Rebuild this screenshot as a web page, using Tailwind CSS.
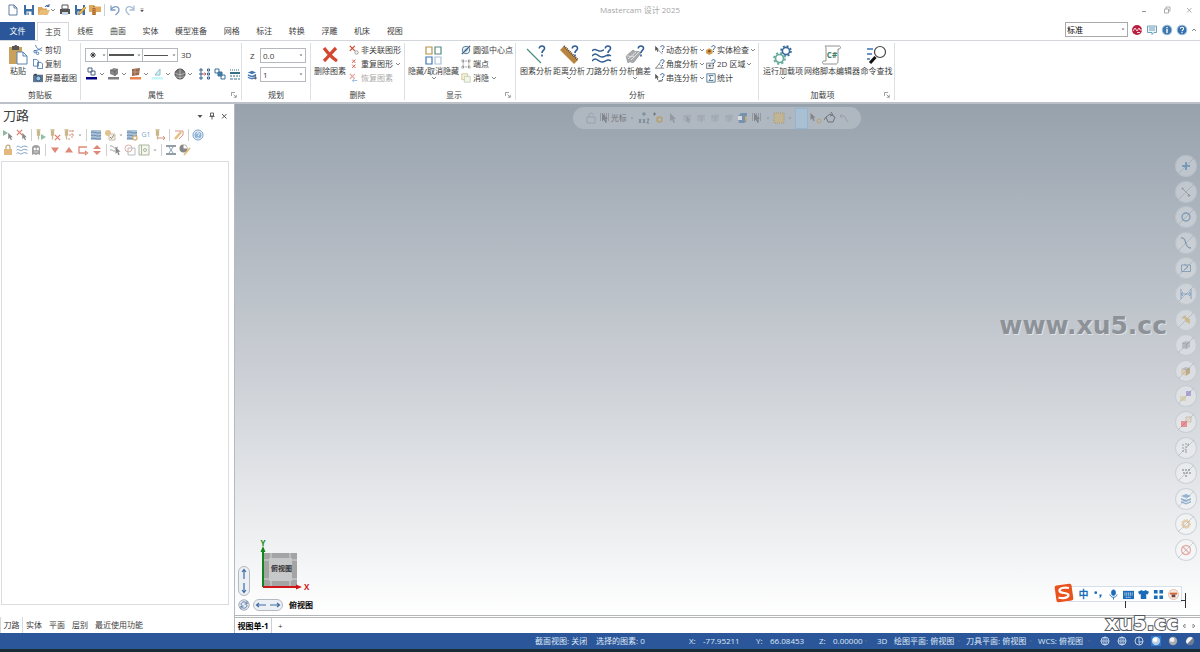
<!DOCTYPE html>
<html lang="zh-CN">
<head>
    <meta charset="UTF-8">
    <meta name="viewport" content="width=device-width, initial-scale=1.0">
    <title>Mastercam 设计 2025</title>
    <script src="https://cdn.jsdelivr.net/npm/@tailwindcss/browser@4"></script>
    <style>
        .outline-text {
            -webkit-text-stroke: 2px #55585c;
            paint-order: stroke fill;
        }
        .guide-button {
            background: linear-gradient(135deg, transparent 48%, rgba(120, 140, 160, .35) 50%, transparent 52%), rgba(255, 255, 255, .3);
        }
    </style>
</head>
<body class="flex h-screen flex-col overflow-hidden bg-white font-['Open_Sans','Noto_Sans_CJK_SC',sans-serif] text-[8px] leading-none text-[#3c3c3c]">

    <!-- Shared icons -->
    <svg class="hidden" fill="none">
        <symbol id="chev" viewBox="0 0 6 6"><path d="M1 2l2 2 2-2" fill="none" stroke="#666" stroke-width=".8"/></symbol>
        <symbol id="caret" viewBox="0 0 6 6"><path d="M1.500 2.500h3l-1.500 1.700z" fill="#777"/></symbol>
        <symbol id="launch" viewBox="0 0 6 6"><path d="M.5 4V.5H4M2.500 2.500l2.500 2.500M5.300 2.800v2.500H2.800" fill="none" stroke="#777" stroke-width=".7"/></symbol>
        <symbol id="cursor" viewBox="0 0 12 12"><path d="M3 1v8.500l2-2 1.500 3.500 1.500-.7L6.500 7H9z" fill="#555"/></symbol>
        <symbol id="question" viewBox="0 0 8 12"><path d="M1.300 3.500C1.300 0 6.700.3 6.500 3.500 6.400 5.500 4 5.500 4 8M4 9.500v2" fill="none" stroke="#2f5b96" stroke-width="1.600"/></symbol>
        <symbol id="redx" viewBox="0 0 12 12"><path d="M1.500 1.500l9 9M10.500 1.500l-9 9" fill="none" stroke="#d04a35" stroke-width="2.200"/></symbol>
        <symbol id="save" viewBox="0 0 12 12"><path d="M1 1h10v10H2L1 10z" fill="#3b6ea5"/><path d="M3 1h6v4H3zM3.500 7.500h5V11h-5z" fill="#fff"/><path d="M4.500 8.500h1.200V11H4.500z" fill="#3b6ea5"/></symbol>
        <symbol id="globe" viewBox="0 0 12 12"><circle cx="6" cy="6" r="4.800" fill="none" stroke="#dbe6f5" stroke-width="1"/><path d="M1 6h10M6 1v10M6 1.200c-3.200 2.800-3.200 6.800 0 9.600M6 1.200c3.200 2.800 3.200 6.800 0 9.600" fill="none" stroke="#dbe6f5" stroke-width=".8"/></symbol>
        <symbol id="waves" viewBox="0 0 12 12"><path d="M.5 3c2-2.500 3.500 1.500 5.500 0s3.500-1 5.500 0M.5 6.300c2-2.500 3.500 1.500 5.500 0s3.500-1 5.500 0M.5 9.600c2-2.500 3.500 1.500 5.500 0s3.500-1 5.500 0" fill="none" stroke="#4a78ad" stroke-width="1"/></symbol>
        <symbol id="block" viewBox="0 0 12 12"><path d="M1 1h10v10H1z" fill="#8aa9c9"/><path d="M1 3.500c3-2 6 2 10 0M1 6.500c3-2 6 2 10 0M1 9.500c3-2 6 2 10 0" fill="none" stroke="#2d5c8c" stroke-width="1.200"/></symbol>
        <symbol id="tool" viewBox="0 0 12 12"><path d="M1.500 1h4M3.500 1v9.500M2.500 2v4h2V2" fill="none" stroke="#b39a5c" stroke-width="1.300"/></symbol>
        <symbol id="cube" viewBox="0 0 12 12"><path d="M2 4l3.500-2L10 3v5L6.500 10 2 9z" fill="#9aa0a7"/><path d="M2 4l4.500 1L10 3M6.500 5v5" fill="none" stroke="#6c737b" stroke-width=".7"/></symbol>
        <symbol id="layers" viewBox="0 0 12 12"><path d="M1 3l5-2 5 2-5 2zM1 5l5 2 5-2v2L6 9 1 7zM1 8l5 2 5-2v1.500l-5 2-5-2z" fill="#4079b5"/></symbol>
    </svg>

    <!-- Title bar -->
    <header class="relative flex h-5 shrink-0 items-center pl-[7px] pr-1">
        <button aria-label="新建" class="mr-1 size-3"><svg viewBox="0 0 12 12" fill="#fff" stroke="#4f7199" stroke-width=".9"><path d="M2 1h5l3 3v7H2zM7 1v3h3"/></svg></button>
        <button aria-label="保存" class="mr-[3px] size-3"><svg viewBox="0 0 12 12"><use href="#save"/></svg></button>
        <button aria-label="打开" class="size-3"><svg viewBox="0 0 12 12"><path d="M0 11V3h4l1 1.500h4V6" fill="#dba55a"/><path d="M0 11l2.500-5H12l-2.500 5z" fill="#e8bd78"/><path d="M7 3c1-2 2.500-2 4-1M11 0v2.500H8.500" fill="none" stroke="#3f6d9f"/></svg></button>
        <svg class="mr-[3px] size-1.5"><use href="#chev"/></svg>
        <button aria-label="打印" class="mr-[3px] size-3"><svg viewBox="0 0 12 12"><path d="M3 1h6v4H3z" fill="#fff" stroke="#555"/><path d="M1 5h10v5H1z" fill="#555"/><path d="M3 8h6v3H3z" fill="#c9d9ea"/></svg></button>
        <button aria-label="另存为" class="mr-[3px] size-3"><svg viewBox="0 0 12 12"><use href="#save"/><path d="M4.500 10.500l.7-2.500L10.500 2.500 12 4 7 9.800z" fill="#efb64b" stroke="#6a5630" stroke-width=".4"/></svg></button>
        <button aria-label="打包" class="size-3"><svg viewBox="0 0 12 12"><path d="M0 1h5l1 1.500h6V8H0z" fill="#e0a95b"/><path d="M3 4h4v7H3z" fill="#d0873d"/><path d="M5 2v9" stroke="#555" stroke-dasharray="1 1"/></svg></button>
        <span class="ml-[3px] mr-1 h-3 w-px bg-[#c9cfd6]"></span>
        <button aria-label="撤销" class="mr-[3px] size-3"><svg viewBox="0 0 12 12" fill="none" stroke="#7c9cc3" stroke-width="1.300"><path d="M2 1.500V6h4.500M2 5.500C5 1 10 2 10 6c0 2-1.500 3.500-3.500 5"/></svg></button>
        <button aria-label="重做" class="mr-[3px] size-3"><svg viewBox="0 0 12 12" fill="none" stroke="#a9bdd5" stroke-width="1.300"><path d="M10 1.500V6H5.500M10 5.500C7 1 2 2 2 6c0 2 1.500 3.500 3.500 5"/></svg></button>
        <svg class="size-1.5"><path d="M1.500 1.500h3M1.500 3h3L3 5z" fill="#555" stroke="#555" stroke-width=".4"/></svg>
        <h1 class="absolute inset-x-0 text-center text-[#a6a6a6] pl-20">Mastercam 设计 2025</h1>
        <div class="relative ml-auto flex gap-2.5 text-[#999]">
            <button aria-label="最小化" class="size-3"><svg viewBox="0 0 12 12" fill="none" stroke="currentColor"><path d="M2 7.500h4"/></svg></button>
            <button aria-label="还原" class="size-3"><svg viewBox="0 0 12 12" fill="none" stroke="currentColor" stroke-width=".8"><path d="M2.500 5h4v4h-4zM4 5V3h4v4H6.500"/></svg></button>
            <button aria-label="关闭" class="size-3"><svg viewBox="0 0 12 12" fill="none" stroke="currentColor" stroke-width=".8"><path d="M3 4l4.500 4.500M7.500 4L3 8.500"/></svg></button>
        </div>
    </header>

    <!-- Ribbon tabs -->
    <nav class="flex h-[21px] shrink-0 items-end border-b border-[#d3d7dc]">
        <button class="mr-0.5 h-[18px] w-[35px] bg-[#2b579a] text-white">文件</button>
        <button class="-mb-px h-[19px] w-8 border border-b-0 border-[#d3d7dc] bg-white pb-px">主页</button>
        <div class="flex h-[18px] w-[342px] *:grow">
            <button>线框</button>
            <button>曲面</button>
            <button>实体</button>
            <button>模型准备</button>
            <button>网格</button>
            <button>标注</button>
            <button>转换</button>
            <button>浮雕</button>
            <button>机床</button>
            <button>视图</button>
        </div>
        <div class="mb-[3px] ml-auto flex items-center gap-[3px] pr-[3px]">
            <div class="relative">
                <select aria-label="配置" class="block h-[15px] w-[63px] appearance-none border border-[#aaa] bg-white pl-px text-black"><option>标准</option></select>
                <svg class="pointer-events-none absolute right-0.5 top-1 size-1.5"><use href="#caret"/></svg>
            </div>
            <button aria-label="Mastercam" class="size-3"><svg viewBox="0 0 12 12"><circle cx="6" cy="6" r="5" fill="#b9203f"/><path d="M2 7l2-3 2 3 2-3 1 2h2M6 8.500h3" fill="none" stroke="#f6d5dc"/></svg></button>
            <button aria-label="反馈" class="size-3"><svg viewBox="0 0 12 12" fill="#edf4f8" stroke="#6297b5" stroke-width=".9"><path d="M1.500 2h9v6.500H8L6 10.500V8.500H1.500zM3 4h6M3 6h6"/></svg></button>
            <button aria-label="信息" class="size-3"><svg viewBox="0 0 12 12"><circle cx="6" cy="6" r="4.800" fill="#3c78ad" stroke="#9bbdd8"/><path d="M6 3v1.200M6 5v4" stroke="#fff" stroke-width="1.400"/></svg></button>
            <button aria-label="帮助" class="size-3"><svg viewBox="0 0 12 12"><circle cx="6" cy="6" r="4.800" fill="#3670ab" stroke="#9bbdd8"/><path d="M4.300 4.800c.2-2.300 3.500-2 3.300 0C7.500 6 6 6 6 7.200M6 8v1.300" fill="none" stroke="#fff" stroke-width="1.100"/></svg></button>
            <button aria-label="折叠功能区" class="size-1.5"><svg viewBox="0 0 6 6"><path d="M1 4l2-2 2 2" fill="none" stroke="#666" stroke-width=".8"/></svg></button>
        </div>
    </nav>

    <!-- Ribbon -->
    <section class="flex h-[63px] shrink-0 border-b-2 border-[#bcc2c8] py-0.5 whitespace-nowrap">
        <div class="flex w-[81px] flex-col border-r border-[#dcdfe3]">
            <div class="flex pl-2">
                <button class="flex w-5 flex-col items-center pt-0.5">
                    <svg class="size-5" viewBox="0 0 20 20"><path d="M1 2h13v17H1z" fill="#c9a05c"/><path d="M4 3V1h2.500c0-1.500 2.500-1.500 2.500 0H11v4H4z" fill="#555"/><path d="M9 7h6l4 4v8H9z" fill="#fff" stroke="#5a83b0"/><path d="M15 7v4h4" fill="none" stroke="#5a83b0"/></svg>
                    <span class="mt-0.5">粘贴</span>
                </button>
                <div class="ml-[5px] *:flex *:h-3.5 *:items-center *:gap-0.5">
                    <button><svg class="size-2.5" viewBox="0 0 12 12" fill="none" stroke="#3e70a8"><path d="M3 0c1 4 3 5 8 7M1 7C5 7 8 5 11 3"/><circle cx="2.500" cy="8" r="1.500"/><circle cx="5.500" cy="10" r="1.500"/></svg>剪切</button>
                    <button><svg class="size-2.5" viewBox="0 0 12 12" fill="#fff" stroke="#3e70a8"><path d="M.5.5h4l2 2v6h-6zM5.500 4h4l2 2v5.500h-6z"/></svg>复制</button>
                    <button><svg class="size-2.5" viewBox="0 0 12 12"><path d="M0 2h12v9H0z" fill="#627890"/><path d="M1.500 1h3v2h-3z" fill="#333"/><circle cx="6.500" cy="6.500" r="3" fill="#9fc4e5" stroke="#244c79"/></svg>屏幕截图</button>
                </div>
            </div>
            <p class="mt-auto pb-px text-center">剪贴板</p>
        </div>

        <div class="relative flex w-[161px] flex-col border-r border-[#dcdfe3] pl-1">
            <div class="mt-[5px] flex items-center">
                <div class="flex h-3.5 border border-[#b5b8bc] *:flex *:items-center *:justify-between *:px-1">
                    <button aria-label="点样式" class="w-[22px] border-r border-[#b5b8bc]"><svg class="size-1.5" viewBox="0 0 6 6" stroke="#222" stroke-width=".8"><path d="M0 3h6M3 0v6M1 1l4 4M5 1L1 5"/></svg><svg class="-mr-1 size-1.5"><use href="#caret"/></svg></button>
                    <button aria-label="线型" class="w-[35px] border-r border-[#b5b8bc] !pl-px"><span class="h-0.5 w-[25px] bg-[#555]"></span><svg class="-mr-1 size-1.5"><use href="#caret"/></svg></button>
                    <button aria-label="线宽" class="w-[34px] !pl-px"><span class="h-px w-6 bg-[#555]"></span><svg class="-mr-1 size-1.5"><use href="#caret"/></svg></button>
                </div>
                <button class="ml-[3px]">3D</button>
            </div>
            <div class="mt-[5px] flex items-center pl-px *:flex *:items-center">
                <button aria-label="线框颜色" class="w-[22px]"><svg class="h-[13px] w-3" viewBox="0 0 12 13"><path d="M2 1h4v4H2zM5 4h4v4H5z" fill="none" stroke="#4f6480"/><path d="M0 10h11v2.500H0z" fill="#000080"/></svg><svg class="ml-px size-1.5"><use href="#chev"/></svg></button>
                <button aria-label="实体颜色" class="w-[22px]"><svg class="h-[13px] w-3" viewBox="0 0 12 13"><path d="M2 3l4-2 4 1v5L7 9 2 7z" fill="#888"/><path d="M2 3l5 1.500V9M7 4.500L10 2" fill="none" stroke="#555" stroke-width=".6"/><path d="M0 10h11v2.500H0z" fill="#808080"/></svg><svg class="ml-px size-1.5"><use href="#chev"/></svg></button>
                <button aria-label="曲面颜色" class="w-[22px]"><svg class="h-[13px] w-3" viewBox="0 0 12 13"><path d="M2 2l8-1-1 7-7 1z" fill="#98694e"/><path d="M5 2v6M2 5h8" stroke="#d5b39c" stroke-width=".6"/><path d="M0 10h11v2.500H0z" fill="#ec8250"/></svg><svg class="ml-px size-1.5"><use href="#chev"/></svg></button>
                <button aria-label="网格颜色" class="w-[22px]"><svg class="h-[13px] w-3" viewBox="0 0 12 13"><path d="M3 8l5-6v6z" fill="#d8f4f8" stroke="#90bcc7"/><path d="M0 10h11v2.500H0z" fill="#c6f6fa"/></svg><svg class="ml-px size-1.5"><use href="#chev"/></svg></button>
                <button aria-label="材质" class="mr-1 w-[21px]"><svg class="size-3" viewBox="0 0 12 12"><circle cx="6" cy="6" r="5" fill="#777" stroke="#444"/><path d="M1 5c3 2 7 2 10 0M1 8c3 2 7 2 10 0M6 1v10" fill="none" stroke="#ccc" stroke-width=".7"/></svg><svg class="ml-px size-1.5"><use href="#chev"/></svg></button>
                <button aria-label="设置全部" class="mr-[3px] w-3"><svg class="size-3" viewBox="0 0 12 12" fill="none" stroke="#356092"><path d="M1 1h2v2H1zM1 5h2v2H1zM1 9h2v2H1zM8.500 1h2v2h-2zM8.500 5h2v2h-2zM8.500 9h2v2h-2z"/><path d="M3.500 6H7M5.500 4.500L7 6 5.500 7.500" stroke="#c45c47"/></svg></button>
                <button aria-label="清除颜色" class="mr-[3px] w-3"><svg class="size-3" viewBox="0 0 12 12" fill="#fff" stroke="#3d709f"><path d="M1 1h4v4H1zM7 7h4v4H7z"/><path d="M4 4h4v4H4z" fill="#3c83a6"/></svg></button>
                <button aria-label="线条属性" class="w-3"><svg class="size-3" viewBox="0 0 12 12" fill="none" stroke="#397184"><path d="M1 2h10" stroke-dasharray="1 1"/><path d="M1 5h10" stroke-width="2"/><path d="M1 8h10" stroke-dasharray="2 1"/><path d="M1 11h10" stroke-dasharray="3 1"/></svg></button>
            </div>
            <p class="mt-auto pb-px pr-3.5 text-center">属性</p>
            <button aria-label="属性选项" class="absolute bottom-0.5 right-1"><svg class="size-1.5"><use href="#launch"/></svg></button>
        </div>

        <div class="flex w-[69px] flex-col border-r border-[#dcdfe3]">
            <div class="grid grid-cols-[10px_46px] items-center gap-x-[3px] gap-y-1 pl-[5px] pt-[5px]">
                <label for="depth" class="pl-[3px]">Z</label>
                <div class="relative"><input id="depth" type="text" value="0.0" class="block h-[15px] w-full border border-[#b5b8bc] px-0.5"><svg class="absolute right-0.5 top-1 size-1.5"><use href="#caret"/></svg></div>
                <label for="level" aria-label="层别"><svg class="size-2.5" viewBox="0 0 12 12"><use href="#layers"/><path d="M10 5v6M8 9l2 2 2-2" fill="none" stroke="#555"/></svg></label>
                <div class="relative"><input id="level" type="text" value="1" class="block h-[15px] w-full border border-[#b5b8bc] px-0.5"><svg class="absolute right-0.5 top-1 size-1.5"><use href="#caret"/></svg></div>
            </div>
            <p class="mt-auto pb-px text-center">规划</p>
        </div>

        <div class="flex w-[94px] flex-col border-r border-[#dcdfe3]">
            <div class="flex pl-[3px]">
                <button class="flex w-8 flex-col items-center pt-0.5">
                    <svg class="size-5" viewBox="0 0 20 20"><path d="M4 3c3 4 7 9 13 13M16 3C12 7 8 12 4 16" fill="none" stroke="#d4472e" stroke-width="3.200"/></svg>
                    <span class="mt-0.5">删除图素</span>
                </button>
                <div class="ml-[3px] *:flex *:h-3.5 *:items-center *:gap-0.5">
                    <button><svg class="size-2.5" viewBox="0 0 12 12"><use href="#redx" width="8" height="8"/><circle cx="9" cy="9" r="2" fill="none" stroke="#888"/></svg>非关联图形</button>
                    <button><svg class="size-2.5" viewBox="0 0 12 12"><use href="#redx" x="3" width="5.500" height="5.500"/><use href="#redx" x="3" y="6" width="5.500" height="5.500"/></svg>重复图形<svg class="size-1.5"><use href="#chev"/></svg></button>
                    <button disabled class="text-[#aaa]"><svg class="size-2.5" viewBox="0 0 12 12"><use href="#redx" width="8" height="8" opacity=".5"/><path d="M4 9h6M6 7l-2 2 2 2" fill="none" stroke="#8fb3da"/></svg>恢复图素</button>
                </div>
            </div>
            <p class="mt-auto pb-px text-center">删除</p>
        </div>

        <div class="relative flex w-[111px] flex-col border-r border-[#dcdfe3]">
            <div class="flex pl-[3px]">
                <button class="flex w-[51px] flex-col items-center pt-0.5">
                    <svg class="size-5" viewBox="0 0 20 20" fill="#fff" stroke-width="1.200"><path d="M2 2h6v7H2z" stroke="#b99345"/><path d="M11 2h6v7h-6z" stroke="#568b84"/><path d="M2 12h6v7H2z" stroke="#3e75b5"/><path d="M11 12h6v7h-6z" stroke="#a8bfdc"/></svg>
                    <span class="mt-0.5">隐藏/取消隐藏</span>
                    <svg class="size-1.5"><use href="#chev"/></svg>
                </button>
                <div class="ml-0.5 *:flex *:h-3.5 *:items-center *:gap-0.5">
                    <button><svg class="size-2.5" viewBox="0 0 12 12" fill="none" stroke="#315f86"><circle cx="6" cy="6" r="4.500"/><path d="M1 11L11 1" stroke-width="1.500"/><path d="M6 3v6M3 6h6" stroke-width=".6"/></svg>圆弧中心点</button>
                    <button><svg class="size-2.5" viewBox="0 0 12 12" fill="none" stroke="#555"><path d="M2.500 2.500h7v7h-7z" stroke-dasharray="1 1"/><path d="M1 1h2v2H1zM9 1h2v2H9zM1 9h2v2H1zM9 9h2v2H9z" stroke-width=".5"/></svg>端点</button>
                    <button><svg class="size-2.5" viewBox="0 0 12 12" fill="#f8f5e4" stroke="#c9bd86"><path d="M1 1h7v7H1z"/><path d="M4 4h7v7H4z" stroke="#b9cbbb"/></svg>消隐<svg class="size-1.5"><use href="#chev"/></svg></button>
                </div>
            </div>
            <p class="mt-auto pb-px pr-3 text-center">显示</p>
            <button aria-label="显示选项" class="absolute bottom-0.5 right-1"><svg class="size-1.5"><use href="#launch"/></svg></button>
        </div>

        <div class="flex w-[243px] flex-col border-r border-[#dcdfe3]">
            <div class="flex gap-px pl-1 *:w-8 *:shrink-0">
                <button class="flex flex-col items-center pt-0.5">
                    <svg class="size-5" viewBox="0 0 20 20"><path d="M1 4l14 14" stroke="#4f8f7e" stroke-width="1.200"/><use href="#question" x="12" width="8" height="12"/></svg>
                    <span class="mt-0.5">图素分析</span>
                </button>
                <button class="flex flex-col items-center pt-0.5">
                    <svg class="size-5" viewBox="0 0 20 20"><path d="M1 5l4-4 14 14-4 4z" fill="#b98440"/><path d="M5 1l14 14" stroke="#5b4430" stroke-width="2" stroke-dasharray="1 1"/><use href="#question" x="12" width="8" height="12"/></svg>
                    <span class="mt-0.5">距离分析</span>
                    <svg class="size-1.5"><use href="#chev"/></svg>
                </button>
                <button class="flex flex-col items-center pt-0.5">
                    <svg class="size-5" viewBox="0 0 20 20" fill="none" stroke="#315f91" stroke-width="1.400"><path d="M0 6c3-4 6 1 9 0s2-1 3-1M0 11c4-5 6 1 10 1s5-4 9-1M0 16c4-5 6 1 10 1s5-4 9-1"/><use href="#question" x="12" width="8" height="12"/></svg>
                    <span class="mt-0.5">刀路分析</span>
                </button>
                <button class="flex flex-col items-center pt-0.5">
                    <svg class="size-5" viewBox="0 0 20 20"><path d="M1 11L8 5c3 3 5 0 8 3l-7 9c-3 2-3-2-6 1z" fill="#a9acae" stroke="#777" stroke-width=".5"/><path d="M3 14l8-7M6 15l8-8M1 11c3-1 3 2 8 0" fill="none" stroke="#eee" stroke-width=".8"/><use href="#question" x="12" width="8" height="12"/></svg>
                    <span class="mt-0.5">分析偏差</span>
                    <svg class="size-1.5"><use href="#chev"/></svg>
                </button>
                <div class="ml-[3px] !w-auto *:flex *:h-3.5 *:items-center *:gap-px">
                    <button><svg class="size-2.5" viewBox="0 0 12 12"><use href="#cursor" x="-2" width="9" height="9"/><path d="M3 5l6 6" stroke="#888"/><use href="#question" x="6" width="6" height="9"/></svg>动态分析<svg class="size-1.5"><use href="#chev"/></svg></button>
                    <button><svg class="size-2.5" viewBox="0 0 12 12"><path d="M1 11L7 3M0 11h11M5 6c2 1 3 3 3 5" fill="none" stroke="#777"/><use href="#question" x="6" width="6" height="9"/></svg>角度分析<svg class="size-1.5"><use href="#chev"/></svg></button>
                    <button><svg class="size-2.5" viewBox="0 0 12 12"><use href="#cursor" x="-2" width="9" height="9"/><path d="M4 10l5-1" stroke="#888" stroke-width="2"/><use href="#question" x="6" width="6" height="9"/></svg>串连分析<svg class="size-1.5"><use href="#chev"/></svg></button>
                </div>
                <div class="!w-auto *:flex *:h-3.5 *:items-center *:gap-px">
                    <button><svg class="size-2.5" viewBox="0 0 12 12"><path d="M0 6l4-2 4 2v4l-4 2-4-2z" fill="#d39e50"/><circle cx="4" cy="7.500" r="1.500" fill="#70532d"/><use href="#question" x="6" width="6" height="9"/></svg>实体检查<svg class="size-1.5"><use href="#chev"/></svg></button>
                    <button><svg class="size-2.5" viewBox="0 0 12 12"><path d="M.5 5h8v6.500h-8z" fill="#e5e8eb" stroke="#777"/><path d="M3 8h3M4.500 6.500v3" stroke="#555"/><use href="#question" x="6" width="6" height="9"/></svg>2D 区域<svg class="size-1.5"><use href="#chev"/></svg></button>
                    <button><svg class="size-2.5" viewBox="0 0 12 12" fill="none" stroke="#416a87"><path d="M1 1h10v10H1z"/><path d="M8.500 4V3h-5L6 6 3.500 9h5V8"/></svg>统计</button>
                </div>
            </div>
            <p class="mt-auto pb-px text-center">分析</p>
        </div>

        <div class="relative flex w-[136px] flex-col border-r border-[#dcdfe3]">
            <div class="flex gap-0.5 pl-1">
                <button class="flex w-10 flex-col items-center pt-0.5">
                    <svg class="size-5" viewBox="0 0 20 20" fill="none"><circle cx="13" cy="6" r="3.600" stroke="#37699c" stroke-width="1.600"/><circle cx="13" cy="6" r="5" stroke="#37699c" stroke-width="1.600" stroke-dasharray="2 1.930"/><circle cx="6.500" cy="13.500" r="4" stroke="#67ab9d" stroke-width="1.700"/><circle cx="6.500" cy="13.500" r="5.500" stroke="#67ab9d" stroke-width="1.700" stroke-dasharray="2.200 2.120"/></svg>
                    <span class="mt-0.5">运行加载项</span>
                    <svg class="size-1.5"><use href="#chev"/></svg>
                </button>
                <button class="flex w-[54px] flex-col items-center pt-0.5">
                    <svg class="size-5" viewBox="0 0 20 20"><path d="M3 1h14c2 0 2 3 0 3h-1v12c0 2-1 3-2 3H2c-2 0-2-3 0-3h2V3c0-1-1-2-1-2z" fill="#fff" stroke="#777" stroke-width=".8"/><text x="10" y="13" text-anchor="middle" font-size="8" font-weight="700" fill="#3f7e67">C#</text></svg>
                    <span class="mt-0.5">网络脚本编辑器</span>
                </button>
                <button class="flex w-[31px] flex-col items-center pt-0.5">
                    <svg class="size-5" viewBox="0 0 20 20" fill="none"><path d="M0 4h6M0 9h5M0 14h3" stroke="#3a74b2" stroke-width="1.500"/><circle cx="13" cy="7" r="5.500" stroke="#444" stroke-width="1.200"/><path d="M8.500 12L3 18" stroke="#111" stroke-width="3"/></svg>
                    <span class="mt-0.5">命令查找</span>
                </button>
            </div>
            <p class="mt-auto pb-px pr-2 text-center">加载项</p>
            <button aria-label="加载项选项" class="absolute bottom-0.5 right-1"><svg class="size-1.5"><use href="#launch"/></svg></button>
        </div>
    </section>

    <main class="flex min-h-0 grow">
        <!-- Toolpath panel -->
        <aside class="flex w-[235px] shrink-0 flex-col border-r border-[#b4bac1]">
            <div class="flex h-[23px] items-center pl-[3px] pr-1.5">
                <h2 class="text-[13px]">刀路</h2>
                <div class="ml-auto flex gap-1 *:size-2">
                    <button aria-label="菜单"><svg viewBox="0 0 8 8"><path d="M1.500 3h5L4 6z" fill="#555"/></svg></button>
                    <button aria-label="固定"><svg viewBox="0 0 8 8" fill="none" stroke="#555" stroke-width=".9"><path d="M2.500 1h3v3h-3zM1.500 4.500h5M4 4.500v3"/></svg></button>
                    <button aria-label="关闭"><svg viewBox="0 0 8 8" fill="none" stroke="#555"><path d="M2 2l4.500 4.500M6.500 2L2 6.500"/></svg></button>
                </div>
            </div>
            <div class="flex h-[15px] items-center gap-0.5 pl-0.5 opacity-70">
                <button aria-label="选择全部" class="size-3"><svg viewBox="0 0 12 12"><path d="M1 1l5 3-5 3z" fill="#5f9c7c"/><use href="#cursor" x="4" y="3" width="9" height="9"/></svg></button>
                <button aria-label="取消选择" class="size-3"><svg viewBox="0 0 12 12"><use href="#redx" width="7" height="7"/><use href="#cursor" x="4" y="3" width="9" height="9"/></svg></button>
                <span class="mx-px h-3 w-px bg-[#bbb]"></span>
                <button aria-label="重新生成" class="size-3"><svg viewBox="0 0 12 12"><use href="#tool"/><path d="M6 5l5 3-5 3z" fill="#5da58a"/></svg></button>
                <button aria-label="重新生成失效" class="size-3"><svg viewBox="0 0 12 12"><use href="#tool"/><use href="#redx" x="5" y="5" width="7" height="7"/></svg></button>
                <button aria-label="切换刀具" class="size-3"><svg viewBox="0 0 12 12"><use href="#tool"/><path d="M6 2h5M9 1v9M6 6h5M5 10h3" fill="none" stroke="#c86448" stroke-dasharray="2 1"/></svg></button>
                <svg class="size-1.5"><use href="#caret"/></svg>
                <span class="mx-px h-3 w-px bg-[#bbb]"></span>
                <button aria-label="刀路模拟" class="size-3"><svg viewBox="0 0 12 12"><use href="#block"/></svg></button>
                <button aria-label="实体验证" class="size-3"><svg viewBox="0 0 12 12"><circle cx="4" cy="4" r="3" fill="#dda75e"/><path d="M5 5h6v6H5z" fill="#f3ead8" stroke="#b1a485"/><path d="M6 8l1.500 1.500L10 6" fill="none" stroke="#555"/></svg></button>
                <svg class="size-1.5"><use href="#caret"/></svg>
                <button aria-label="模拟器选项" class="size-3"><svg viewBox="0 0 12 12"><use href="#block"/><circle cx="9" cy="9" r="2" fill="#fff" stroke="#c99646" stroke-width="1.300"/></svg></button>
                <button aria-label="后处理" class="size-3 text-[7px] text-[#3f79b6]">G1</button>
                <button aria-label="进给" class="size-3"><svg viewBox="0 0 12 12"><use href="#tool"/><path d="M4 9h7M9 7l2 2-2 2" fill="none" stroke="#c86448"/></svg></button>
                <span class="mx-px h-3 w-px bg-[#bbb]"></span>
                <button aria-label="高速进给" class="size-3"><svg viewBox="0 0 12 12"><path d="M2 10l6-7" stroke="#dca64c" stroke-width="2.500"/><path d="M2 2h8v4L6 10" fill="none" stroke="#c96653"/></svg></button>
                <span class="mx-px h-3 w-px bg-[#bbb]"></span>
                <button aria-label="帮助" class="size-3"><svg viewBox="0 0 12 12"><circle cx="6" cy="6" r="5" fill="#fff" stroke="#3b75ad"/><circle cx="6" cy="6" r="3.600" fill="#5e93c5"/><path d="M4.700 5c0-2 2.800-1.800 2.700 0C7.300 6 6 6 6 7.200M6 8v1" fill="none" stroke="#fff" stroke-width=".9"/></svg></button>
            </div>
            <div class="flex h-[15px] items-center gap-0.5 pl-0.5 opacity-70">
                <button aria-label="锁定" class="size-3"><svg viewBox="0 0 12 12"><path d="M2 5h8v6H2z" fill="#d69b45"/><path d="M4 5V3c0-2.500 4-2.500 4 0v2" fill="none" stroke="#a58049" stroke-width="1.200"/></svg></button>
                <button aria-label="显示刀路" class="size-3"><svg viewBox="0 0 12 12"><use href="#waves"/></svg></button>
                <button aria-label="关闭后处理" class="size-3"><svg viewBox="0 0 12 12"><path d="M2 11V4c0-4 8-4 8 0v7L8 10l-2 1-2-1z" fill="#777"/><path d="M4 4h1.500v2H4zM7 4h1.500v2H7zM4 8h4" fill="#fff" stroke="#fff" stroke-width=".6"/></svg></button>
                <span class="mx-px h-3 w-px bg-[#bbb]"></span>
                <button aria-label="下移" class="size-3"><svg viewBox="0 0 12 12"><path d="M2 3.500h8L6 9z" fill="#d1583f"/></svg></button>
                <button aria-label="上移" class="size-3"><svg viewBox="0 0 12 12"><path d="M2 8.500h8L6 3z" fill="#d1583f"/></svg></button>
                <button aria-label="插入箭头" class="size-3"><svg viewBox="0 0 12 12"><path d="M10 3H2v6h7M8 7l2.500 2L8 11" fill="none" stroke="#d1583f" stroke-width="1.300"/></svg></button>
                <button aria-label="滚动" class="size-3"><svg viewBox="0 0 12 12"><path d="M2 5h8L6 1zM2 7h8L6 11z" fill="#d1583f"/></svg></button>
                <span class="mx-px h-3 w-px bg-[#bbb]"></span>
                <button aria-label="仅显示已选" class="size-3"><svg viewBox="0 0 12 12"><path d="M0 2c4-1 3 4 8 1M0 6c3-1 3 2 5 1" fill="none" stroke="#777"/><use href="#cursor" x="3" y="2" width="10" height="10"/></svg></button>
                <button aria-label="仅显示关联" class="size-3"><svg viewBox="0 0 12 12" fill="none"><circle cx="4.500" cy="4.500" r="3.500" stroke="#d28c7c"/><path d="M4 4h7v7H4z" stroke="#9ca2a8"/></svg></button>
                <button aria-label="显示选项" class="size-3"><svg viewBox="0 0 12 12" fill="#f4f4e9" stroke="#879b78"><path d="M1 1h10v10H1zM3.500 1v10"/><circle cx="7" cy="6" r="1.500"/></svg></button>
                <svg class="size-1.5"><use href="#caret"/></svg>
                <span class="mx-px h-3 w-px bg-[#bbb]"></span>
                <button aria-label="机床选项" class="size-3"><svg viewBox="0 0 12 12"><path d="M1 1h10v2H1zM1 9h10v2H1z" fill="#657483"/><path d="M4 3l4 6M8 3L4 9" stroke="#557d9e"/></svg></button>
                <button aria-label="编辑选项" class="size-3"><svg viewBox="0 0 12 12"><circle cx="4.500" cy="4.500" r="4" fill="#555"/><path d="M4.500 4.500V1A3.500 3.500 0 0 1 8 4.500z" fill="#fff"/><path d="M5 11l6-7" stroke="#d8a343" stroke-width="1.800"/></svg></button>
            </div>
            <div class="ml-px mr-[5px] mt-1 grow border border-[#dadcdf]"></div>
            <nav class="mt-3 flex h-4 items-center gap-[7px]">
                <button class="-mr-1 flex h-4 w-[23px] items-center justify-center border border-[#d5d8dc] border-y-0">刀路</button>
                <button>实体</button>
                <button>平面</button>
                <button>层别</button>
                <button>最近使用功能</button>
            </nav>
        </aside>

        <!-- Graphics area -->
        <div class="flex min-w-0 grow flex-col">
            <div class="relative grow bg-linear-to-b from-[#97a2ad] via-[#c9cdd3] to-white">
                <div class="absolute left-[35%] top-[3px] flex h-[22px] w-[288px] items-center gap-0.5 rounded-full bg-[#b4bcc4]/80 pl-3 text-[#70777f]">
                    <div class="flex items-center gap-0.5 opacity-50">
                        <button aria-label="锁定光标" class="size-3"><svg viewBox="0 0 12 12" fill="none" stroke="#858c93"><path d="M2 5h8v6H2zM4 5V3c0-2.500 4-2.500 4 0"/></svg></button>
                        <button class="flex items-center text-[#333]"><svg class="size-3" viewBox="0 0 12 12"><path d="M1 2h10M1 4h10M1 6h10M1 8h10" stroke="#445" stroke-dasharray="1 1"/><use href="#cursor"/></svg>光标</button>
                        <svg class="mr-px size-1.5"><use href="#caret"/></svg>
                        <button aria-label="坐标输入" class="size-3"><svg viewBox="0 0 12 12" fill="none" stroke="#3f5870"><path d="M6 0v4M4 2h4M1 7l2 4M3 7l-2 4M5 7l2 4M7 7l-2 4M9 7h2l-2 4h2"/></svg></button>
                        <button aria-label="捕捉设置" class="mr-px size-3"><svg viewBox="0 0 12 12" fill="none"><circle cx="7.500" cy="7.500" r="2.500" stroke="#c08b22" stroke-width="1.500"/><path d="M1 2h3M2.500 .5v3" stroke="#333"/></svg></button>
                        <button aria-label="选择" class="size-3"><svg viewBox="0 0 12 12" opacity=".6"><use href="#cursor"/></svg></button>
                        <button aria-label="选择边" class="size-3"><svg viewBox="0 0 12 12" opacity=".5"><use href="#cube"/><use href="#cursor" x="3" y="3" width="9" height="9"/></svg></button>
                        <button aria-label="选择面" class="size-3"><svg viewBox="0 0 12 12" opacity=".6"><use href="#cube"/></svg></button>
                        <button aria-label="选择主体" class="size-3"><svg viewBox="0 0 12 12" opacity=".6"><use href="#cube"/></svg></button>
                        <button aria-label="选择特征" class="size-3"><svg viewBox="0 0 12 12" opacity=".6"><use href="#cube"/></svg></button>
                        <button aria-label="选择背面" class="size-3"><svg viewBox="0 0 12 12"><path d="M1 4l3-3h6v8l-3 2H2z" fill="#3e6e9c"/><path d="M1 4h4v4H1z" fill="#fff"/><path d="M8 4h2v5H8z" fill="#d99b37"/></svg></button>
                        <button aria-label="窗选" class="size-3"><svg viewBox="0 0 12 12"><path d="M1 2h10M1 4h10M1 6h10M1 8h10" stroke="#445" stroke-dasharray="1 1"/><use href="#cursor"/></svg></button>
                        <svg class="size-1.5"><use href="#caret"/></svg>
                        <button aria-label="选择方式" class="size-3"><svg viewBox="0 0 12 12"><path d="M1 1h10v10H1z" fill="#d6b46b" stroke="#a17626" stroke-dasharray="1 1"/></svg></button>
                        <svg class="size-1.5"><use href="#caret"/></svg>
                    </div>
                    <button aria-label="自动选择" class="h-[21px] w-[13px] border border-[#93b5d0] bg-[#a9c0d2]"></button>
                    <div class="flex items-center gap-0.5 opacity-50">
                        <button aria-label="验证选择" class="size-3"><svg viewBox="0 0 12 12"><use href="#cursor" x="-2" y="0" width="10" height="10"/><circle cx="9" cy="9" r="2" fill="none" stroke="#c18e30"/></svg></button>
                        <button aria-label="反向选择" class="size-3"><svg viewBox="0 0 12 12" fill="none" stroke="#333"><path d="M2 5l4-3 5 3-2 5H4zM2 5L0 8"/><path d="M7 0l2 3-3 1"/></svg></button>
                        <button aria-label="上次选择" class="size-3"><svg viewBox="0 0 12 12" fill="none" stroke="#888"><path d="M2 4h4l4 6M4 2L2 4l2 2"/></svg></button>
                    </div>
                </div>

                <div class="absolute right-[3px] top-[51px] flex h-[406px] flex-col justify-between *:flex *:size-[22px] *:items-center *:justify-center *:rounded-full *:border *:border-[#aeb9c4]/50 [&_svg]:size-3 [&_svg]:opacity-50">
                    <button class="guide-button" aria-label="点"><svg viewBox="0 0 12 12"><path d="M6 2v8M2 6h8" stroke="#3972a9" stroke-width="2"/></svg></button>
                    <button class="guide-button" aria-label="线"><svg viewBox="0 0 12 12"><path d="M2.500 2.500l7 7M2 2h1v1H2zM9 8v3M7.500 9.500h3" fill="#667" stroke="#667" stroke-width=".9"/></svg></button>
                    <button class="guide-button" aria-label="圆弧"><svg viewBox="0 0 12 12"><circle cx="6" cy="6" r="4" fill="none" stroke="#396a9b" stroke-width="1.300"/></svg></button>
                    <button class="guide-button" aria-label="曲线"><svg viewBox="0 0 12 12"><path d="M1 1c7-1 2 10 10 10" fill="none" stroke="#47688d" stroke-width="1.300"/></svg></button>
                    <button class="guide-button" aria-label="矩形"><svg viewBox="0 0 12 12" fill="none" stroke="#47749d"><path d="M1.500 3h9v6.500h-9zM4 2l4 3M4 8l4-3"/></svg></button>
                    <button class="guide-button" aria-label="标注"><svg viewBox="0 0 12 12" fill="none" stroke="#3972a9"><path d="M1 1v10M11 1v10M1 6h10M3 4L1 6l2 2M9 4l2 2-2 2"/></svg></button>
                    <button class="guide-button" aria-label="修剪"><svg viewBox="0 0 12 12"><path d="M1 4l4-3 2 3 3 1v5L6 8 5 5z" fill="#c9a147"/></svg></button>
                    <button class="guide-button" aria-label="实体"><svg viewBox="0 0 12 12"><use href="#cube"/></svg></button>
                    <button class="guide-button" aria-label="曲面"><svg viewBox="0 0 12 12"><use href="#cube"/><path d="M1 4l5 1v6L1 9z" fill="#d7b98a"/><path d="M6 5l4-2v5l-4 3z" fill="#a37a35"/></svg></button>
                    <button class="guide-button" aria-label="复制属性"><svg viewBox="0 0 12 12"><path d="M0 6h6v5H0z" fill="#cfc28b"/><path d="M6 1h5v5H6z" fill="#7f6cc0"/></svg></button>
                    <button class="guide-button" aria-label="更改颜色"><svg viewBox="0 0 12 12"><path d="M6 1h5v5H6z" fill="#e2d6be" stroke="#b59d77"/><path d="M1 5h6v6H1z" fill="#ea3f46"/></svg></button>
                    <button class="guide-button" aria-label="列表"><svg viewBox="0 0 12 12" fill="none" stroke="#555"><path d="M3 2v8M5 2h4M6 4v6M8 2v3M5 10h2" stroke-dasharray="2 1"/></svg></button>
                    <button class="guide-button" aria-label="网格"><svg viewBox="0 0 12 12" stroke="#555" stroke-width="1.500"><path d="M2 3h8M3 6h8M5 9h3" stroke-dasharray="2 1"/></svg></button>
                    <button class="guide-button" aria-label="层别"><svg viewBox="0 0 12 12"><use href="#layers"/></svg></button>
                    <button class="guide-button" aria-label="设置"><svg viewBox="0 0 12 12" fill="none" stroke="#d4a45f"><circle cx="6" cy="6" r="3" stroke-width="2"/><circle cx="6" cy="6" r="4.500" stroke-dasharray="1.500 1.500"/></svg></button>
                    <button class="guide-button" aria-label="禁用"><svg viewBox="0 0 12 12" fill="none" stroke="#d86a5c" stroke-width="1.300"><circle cx="6" cy="6" r="4.500"/><path d="M2.500 2.500l7 7"/></svg></button>
                </div>

                <p class="absolute right-[33px] top-[209px] font-['DejaVu_Sans'] text-[25px] font-bold text-[#8d9299] [text-shadow:1px_1px_0_#e0e2e5]">www.xu5.cc</p>

                <!-- View gnomon -->
                <div class="absolute bottom-1 left-0.5 h-[74px] w-20">
                    <svg class="absolute inset-0" width="80" height="74" viewBox="0 0 80 74">
                        <path d="M27 16h33v33H27z" fill="#a4a4a4"/>
                        <path d="M32 21h23v23H32z" fill="#c7c8ca"/>
                        <path d="M34 16v5M53 16v5M34 44v5M53 44v5M27 23h5M27 42h5M55 23h5M55 42h5" stroke="#d5d5d5"/>
                        <path d="M26 50V14" stroke="#11861c" stroke-width="2"/><path d="M23.500 15L26 9l2.500 6z" fill="#11861c"/>
                        <path d="M26 50h34" stroke="#cf1515" stroke-width="2"/><path d="M59 47.500l6 2.500-6 2.500z" fill="#cf1515"/>
                        <text x="26" y="9" text-anchor="middle" font-size="8" font-weight="700" fill="#11861c">Y</text>
                        <text x="67" y="53" font-size="8" font-weight="700" fill="#cf1515">X</text>
                        <rect x="1.500" y="29.500" width="11" height="29" rx="5.500" fill="#eceff3" stroke="#b4bac2"/>
                        <path d="M7 33v9M5 35l2-2.500 2 2.500M7 46v9M5 53l2 2.500 2-2.500" fill="none" stroke="#3e6da4" stroke-width="1.200"/>
                        <circle cx="7" cy="68" r="5.200" fill="#e6ebf1" stroke="#a4adba"/>
                        <path d="M4 68c0-4 5-4 6-1M10 68c0 4-5 4-6 1M10 64v3H7.500M4 72v-3h2.500" fill="none" stroke="#4a6f9e" stroke-width=".9"/>
                        <rect x="16.500" y="62.500" width="29" height="11" rx="5.500" fill="#eceff3" stroke="#b4bac2"/>
                        <path d="M20 68h9M22 66l-2.500 2 2.500 2M33 68h9M40 66l2.500 2-2.500 2" fill="none" stroke="#3e6da4" stroke-width="1.200"/>
                    </svg>
                    <span class="absolute left-[34px] top-7 text-[7px] font-bold text-[#333]">俯视图</span>
                    <span class="absolute left-[52px] top-16 whitespace-nowrap font-bold text-black">俯视图</span>
                </div>

                <!-- Input method bar -->
                <div class="absolute bottom-[13px] right-[18px] flex h-4 items-center gap-1 border border-[#d6dfeb] bg-white pl-[9px] pr-0.5 text-[#1a6cb8]">
                    <svg class="absolute -left-[15px] -top-1 size-5" viewBox="0 0 20 20"><rect x="1.500" y="1.500" width="17" height="17" rx="2" transform="rotate(-8 10 10)" fill="#e9511d"/><path d="M15 5C10 4 5 5 5.500 8s9 1 9 4-6 4-10 2.500" fill="none" stroke="#fff" stroke-width="2.200"/></svg>
                    <button class="w-[11px] text-[10px] font-bold">中</button>
                    <button aria-label="标点" class="size-[11px]"><svg viewBox="0 0 12 12" fill="currentColor"><circle cx="3" cy="4" r="1.500"/><path d="M7 6h2.500c0 2-1 3.500-2.500 4L7.500 8H7z"/></svg></button>
                    <button aria-label="语音" class="size-[11px]"><svg viewBox="0 0 12 12" fill="none" stroke="currentColor"><rect x="4" y="1" width="4" height="6" rx="2" fill="currentColor"/><path d="M2 6c1 4 7 4 8 0M6 9v2.500"/></svg></button>
                    <button aria-label="键盘" class="size-[11px]"><svg viewBox="0 0 12 12"><path d="M0 2h12v9H0z" fill="currentColor"/><path d="M1.500 4.500h9M1.500 6.500h9M3 9h6" stroke="#fff" stroke-dasharray="1.200 .8"/></svg></button>
                    <button aria-label="皮肤" class="size-[11px]"><svg viewBox="0 0 12 12" fill="currentColor"><path d="M4 1c1 1.500 3 1.500 4 0l4 2-1.500 3L9 5.500V11H3V5.500L1.500 6 0 3z"/></svg></button>
                    <button aria-label="工具箱" class="size-[11px]"><svg viewBox="0 0 12 12" fill="currentColor"><path d="M1 1h4v4H1zM7 1h4v4H7zM1 7h4v4H1zM7 7h4v4H7z"/></svg></button>
                    <button aria-label="助手" class="size-[11px]"><svg viewBox="0 0 12 12"><circle cx="6" cy="6" r="5.500" fill="#f3e9e2" stroke="#e2a58c" stroke-width=".7"/><path d="M2 4h8v2H2z" fill="#d96633"/><path d="M4 6h4v3H4z" fill="#644"/></svg></button>
                </div>
                <svg class="absolute bottom-1 right-3" width="64" height="20" viewBox="0 0 64 20" fill="none" stroke="#333"><path d="M1.500 10v7M61.500 2v15M57 9.500h4"/></svg>
            </div>
            <div class="relative flex h-[18px] shrink-0 items-center border-t-3 border-double border-[#b4b7ba] bg-white">
                <button class="h-full w-[37px] border-r border-[#ccd0d4] font-bold text-black">视图单-1</button>
                <button aria-label="新建视图单" class="pl-1.5">+</button>
                <span class="h-full grow"></span>
                <button aria-label="向左" class="size-2.5"><svg viewBox="0 0 10 10"><path d="M6 3L4 5l2 2z" fill="none" stroke="#999"/></svg></button>
                <button aria-label="向右" class="mr-px size-2.5"><svg viewBox="0 0 10 10"><path d="M4 3l2 2-2 2z" fill="none" stroke="#999"/></svg></button>
                <p class="outline-text absolute bottom-0 right-[22px] font-['DejaVu_Sans'] text-[20px] font-bold text-white">xu5.cc</p>
            </div>
        </div>
    </main>

    <!-- Status bar -->
    <footer class="flex h-[19px] shrink-0 items-center justify-end whitespace-nowrap border-b-3 border-[#172c35] bg-[#2b579a] pr-[5px] text-[#dfe8f4]">
        <button class="w-[61px] text-left">截面视图: 关闭</button>
        <span class="w-[93px]">选择的图素: 0</span>
        <span class="w-3.5">X:</span><span class="w-[53px]">-77.95211</span>
        <span class="w-3.5">Y:</span><span class="w-[49px]">66.08453</span>
        <span class="w-3.5">Z:</span><span class="w-[30px]">0.00000</span>
        <svg class="mr-2 size-1.5 opacity-50"><use href="#caret"/></svg>
        <button class="w-[17px] text-left">3D</button>
        <button class="flex w-[72px] items-center justify-between pr-1">绘图平面: 俯视图<svg class="size-1.5 opacity-50"><use href="#caret"/></svg></button>
        <button class="flex w-[72px] items-center justify-between pr-1">刀具平面: 俯视图<svg class="size-1.5 opacity-50"><use href="#caret"/></svg></button>
        <button class="flex w-[62px] items-center justify-between pr-2">WCS: 俯视图<svg class="size-1.5 opacity-50"><use href="#caret"/></svg></button>
        <div class="flex gap-[7px] *:size-2.5">
            <button aria-label="线框"><svg viewBox="0 0 12 12"><use href="#globe"/></svg></button>
            <button aria-label="隐藏线"><svg viewBox="0 0 12 12"><use href="#globe"/></svg></button>
            <button aria-label="无隐藏线"><svg viewBox="0 0 12 12" fill="none" stroke="#dbe6f5"><circle cx="6" cy="6" r="4.800"/><path d="M6 1v6h5M6 7c0 2 1 3 2 4"/></svg></button>
            <button aria-label="着色" class="bg-[#2b79cf]"><svg viewBox="0 0 12 12"><circle cx="6" cy="6" r="5" fill="#b7cee7"/><circle cx="5" cy="4.500" r="2.800" fill="#fff"/></svg></button>
            <button aria-label="着色边框"><svg viewBox="0 0 12 12"><circle cx="6" cy="6" r="5" fill="#a8acb3"/><circle cx="5" cy="4.500" r="2.800" fill="#f0f0f0"/></svg></button>
            <button aria-label="半透明"><svg viewBox="0 0 12 12"><circle cx="6" cy="6" r="5" fill="#6d7e94"/><path d="M2.500 9.500A5 5 0 0 1 9.500 2.500z" fill="#f5f5f5"/></svg></button>
        </div>
    </footer>
</body>
</html>
